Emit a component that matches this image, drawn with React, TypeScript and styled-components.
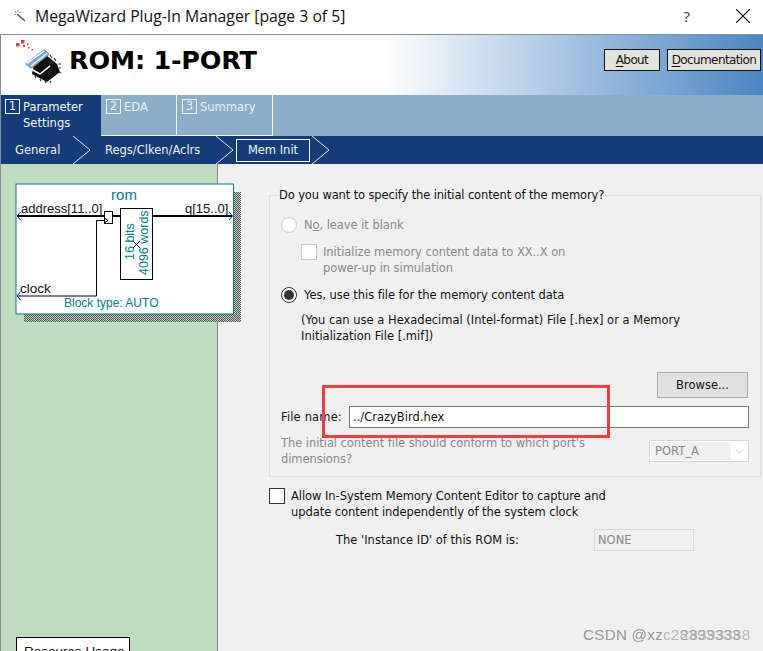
import React from "react";
import styled, { createGlobalStyle } from "styled-components";
import { X, ChevronDown } from "lucide-react";

const Global = createGlobalStyle`
  html, body { margin: 0; padding: 0; background: #fff; }
  * { box-sizing: border-box; }
`;
const UI = `"DejaVu Sans", "Liberation Sans", sans-serif`;

const Page = styled.div`
  position: relative; width: 763px; height: 651px; overflow: hidden;
  display: flex; flex-direction: column;
  font-family: ${UI}; font-size: 11.5px; color: #111;
`;
const TitleBar = styled.div`
  height: 35px; flex: none; display: flex; align-items: center;
  padding: 0 7px 3px 13px; background: #fff; border-bottom: 1px solid #8a8d91;
`;
const TitleText = styled.div`
  margin-left: 9px; font: 15.75px "Open Sans", sans-serif; color: #111; flex: 1;
`;
const Help = styled.div`
  font: 15px "Open Sans", sans-serif; color: #333; margin-right: 40px;
`;
const Frame = styled.div`
  flex: 1; display: flex; flex-direction: column; min-height: 0;
  border-left: 1px solid #8a8d91;
`;
const Header = styled.div`
  height: 60px; flex: none; display: flex; align-items: center;
  padding: 0 2px 0 15px;
  background: linear-gradient(90deg, #fff 0%, #fff 50%, #4a86c3 100%);
`;
const HeaderTitle = styled.div`
  margin-left: 7px; font: bold 25.5px "DejaVu Sans", sans-serif; color: #000; flex: 1;
  letter-spacing: -0.25px; position: relative; top: -5px;
`;
const HeadButton = styled.div<{ $w: number }>`
  width: ${p => p.$w}px; height: 22px; margin-left: 7px; margin-top: -10px;
  background: #e3e3de; border: 1px solid #111;
  display: flex; align-items: center; justify-content: center; color: #111; font-size: 12px;
  letter-spacing: -0.6px;
  u { text-underline-offset: 2px; }
`;
const Tabs = styled.div`
  height: 41px; flex: none; display: flex; background: #8bafcb;
`;
const Tab = styled.div<{ $w: number; $active?: boolean }>`
  width: ${p => p.$w}px; display: flex; padding: 4px 0 0 ${p => p.$active ? 4 : 5}px; gap: 3px;
  color: ${p => p.$active ? "#f4f7fa" : "#eaf0f5"};
  background: ${p => p.$active ? "#143c78" : "transparent"};
  line-height: 16px;
  ${p => p.$active ? "" : "border: 1px solid #f2f5f8; border-width: 0 1px 1px 0;"}
`;
const TabNum = styled.span`
  width: 15px; height: 15px; flex: none; border: 1px solid #f2f5f8;
  display: flex; align-items: center; justify-content: center; font-size: 11.5px; line-height: 1;
`;
const Steps = styled.div`
  height: 28px; flex: none; display: flex; align-items: center; background: #143c78; color: #f0f3f7;
`;
const Step = styled.div<{ $w: number; $pad: number }>`
  width: ${p => p.$w}px; padding-left: ${p => p.$pad}px; white-space: nowrap;
`;
const StepBox = styled.div`
  width: 74px; height: 23px; border: 1px solid #fff; display: flex;
  align-items: center; justify-content: center; margin: 0 2px 0 3px;
`;
const Chevron = () => (
  <svg width="17" height="28" viewBox="0 0 17 28" style={{ flex: "none" }}>
    <path d="M0 0 L17 14 L0 28" fill="none" stroke="#dfe6ef" strokeWidth="1" />
  </svg>
);
const Body = styled.div`flex: 1; display: flex; min-height: 0;`;
const LeftPane = styled.div`
  position: relative; z-index: 1;
  width: 217px; flex: none; background: #c0dcc0; border-right: 1px solid #8a8d91;
  display: flex; flex-direction: column; padding: 19px 0 0 14px;
`;
const Diagram = styled.svg`flex: none; display: block;`;
const ResourceButton = styled.div`
  flex: none; margin-top: auto; margin-bottom: -12px; margin-left: 1px; width: 114px; height: 26px;
  background: #fff; border: 1px solid #000; padding: 6px 0 0 7px; white-space: nowrap;
  font: 13.5px "Liberation Sans", sans-serif; color: #111;
`;
const RightPane = styled.div`
  flex: 1; background: #f0f0f0; padding: 24px 2px 0 51px; display: flex; flex-direction: column;
`;
const Group = styled.fieldset`
  margin: 0; padding: 0 11px 0 11px; border: 1px solid #dcdcdc; height: 289px; min-width: 0;
  display: flex; flex-direction: column;
`;
const Legend = styled.legend`
  padding: 0 1px 0 0; margin-left: -2px; line-height: 14px; white-space: nowrap; letter-spacing: -0.13px;
`;
const RadioRow = styled.div<{ $disabled?: boolean; $top: number }>`
  display: flex; align-items: center; height: 16px; margin-top: ${p => p.$top}px; gap: 7px;
  letter-spacing: -0.06px;
  color: ${p => p.$disabled ? "#888" : "#111"};
`;
const Radio = styled.span<{ $on?: boolean; $disabled?: boolean }>`
  width: 16px; height: 16px; flex: none; border-radius: 50%; background: #fff;
  border: 1px solid ${p => p.$disabled ? "#ccc" : "#333"};
  display: flex; align-items: center; justify-content: center;
  &::after { content: ""; width: 10px; height: 10px; border-radius: 50%; background: ${p => p.$on ? "#333" : "transparent"}; }
`;
const Indented = styled.div<{ $top: number; $disabled?: boolean }>`
  margin: ${p => p.$top}px 0 0 20px; display: flex; gap: 6px; line-height: 16px;
  color: ${p => p.$disabled ? "#888" : "#111"};
  letter-spacing: ${p => p.$disabled ? "-0.06px" : "0"};
`;
const Check = styled.span<{ $disabled?: boolean }>`
  width: 16px; height: 16px; flex: none; background: #fff;
  border: 1px solid ${p => p.$disabled ? "#ccc" : "#333"};
`;
const BrowseRow = styled.div`display: flex; justify-content: flex-end; margin-top: 28px; padding-right: 1px;`;
const Browse = styled.div`
  width: 91px; height: 26px; background: #e1e1e1; border: 1px solid #adadad;
  display: flex; align-items: center; justify-content: center;
`;
const FileRow = styled.div`display: flex; align-items: center; margin-top: 8px; height: 22px;`;
const FileLabel = styled.div`width: 68px; flex: none; white-space: nowrap; letter-spacing: .15px;`;
const FileInput = styled.div`
  width: 400px; height: 22px; background: #fff; border: 1px solid #7a7a7a; padding-left: 3px;
  display: flex; align-items: center;
`;
const PortRow = styled.div`display: flex; justify-content: space-between; margin-top: 7px; color: #888;`;
const PortText = styled.div`line-height: 16px; width: 330px; letter-spacing: -0.06px;`;
const PortSelect = styled.div`
  width: 100px; height: 22px; margin-top: 5px; background: #fff; border: 1px solid #d9d9d9;
  padding: 1px; display: flex; color: #888;
`;
const PortValue = styled.div`
  width: 80px; background: #f0f0f0; padding-left: 4px; display: flex; align-items: center;
`;
const PortArrow = styled.div`flex: 1; display: flex; align-items: center; justify-content: center; color: #aaa;`;
const AllowRow = styled.div`display: flex; gap: 6px; margin-top: 11px; line-height: 16px; letter-spacing: -0.06px;`;
const InstanceRow = styled.div`display: flex; align-items: center; margin: 9px 0 0 67px;`;
const InstanceLabel = styled.div`width: 258px; flex: none; white-space: nowrap;`;
const InstanceInput = styled.div`
  width: 100px; height: 22px; border: 1px solid #d9d9d9; background: #f0f0f0; color: #888;
  padding-left: 3px; display: flex; align-items: center;
`;
const RedBox = styled.div`
  position: absolute; left: 322px; top: 385px; width: 288px; height: 53px; border: 3px solid #f73b3b; z-index: 2;
`;
const Watermark = styled.div`
  position: absolute; left: 583px; top: 626px; font: 15.3px "Liberation Sans", sans-serif; letter-spacing: .2px;
  color: rgba(125,125,125,.5); white-space: pre; filter: blur(.3px); z-index: 2;
`;

const T: React.FC<{ x: number; y: number; s: number; c?: string; a?: "middle"; r?: boolean; children: string }> = ({ x, y, s, c = "#111", a, r, children }) => (
  <text x={x} y={y} fontSize={s} fill={c} textAnchor={a} fontFamily="'Liberation Sans', sans-serif"
    transform={r ? `rotate(-90 ${x} ${y})` : undefined}>{children}</text>
);

const RomDiagram = () => (
  <Diagram width="230" height="142" viewBox="15 183 230 142">
    <defs>
      <pattern id="hatch" width="2" height="2" patternUnits="userSpaceOnUse">
        <rect width="2" height="2" fill="#c0d0c0" />
        <rect width="1" height="1" fill="#555" />
        <rect x="1" y="1" width="1" height="1" fill="#555" />
      </pattern>
    </defs>
    <rect x="24" y="192" width="217" height="130" fill="url(#hatch)" />
    <rect x="16" y="184" width="217.5" height="130" fill="#fff" stroke="#007c80" strokeWidth="1" />
    <T x={124} y={200} s={15} c="#00808a" a="middle">rom</T>
    <T x={21} y={213} s={13}>address[11..0]</T>
    <T x={185} y={213} s={13}>q[15..0]</T>
    <T x={20} y={293} s={13.5}>clock</T>
    <path d="M17 216H104M113 216H120M153 216H232" stroke="#000" strokeWidth="2" fill="none" />
    <path d="M17.5 296H96.5V220.5H104" stroke="#000" strokeWidth="1" fill="none" />
    <rect x="104.5" y="211.5" width="8" height="12" fill="#fff" stroke="#000" />
    <path d="M105 218.5L108 220.5L105 222.5" fill="none" stroke="#000" />
    <rect x="120.5" y="208.5" width="32" height="71" fill="#fff" stroke="#000" />
    <T x={134} y={260} s={12.5} c="#00808a" r>16 bits</T>
    <T x={148} y={275} s={12.5} c="#00808a" r>4096 words</T>
    <path d="M133 241L140 248M140 241L133 248" stroke="#000" />
    <path d="M20.5 212L17 216L20.5 220M229 212L232.5 216L229 220M20.5 291.5L17 296L20.5 300" stroke="#1010e0" fill="none" />
    <T x={64} y={307} s={12} c="#00808a">Block type: AUTO</T>
  </Diagram>
);

const Logo = () => (
  <svg width="46" height="46" viewBox="0 0 46 46" style={{ flex: "none", marginTop: -4 }}>
    <g fill="#d8433c">
      <rect x="0" y="3" width="3.5" height="3.5" /><rect x="5" y="0" width="3.5" height="3.5" />
      <rect x="7" y="5" width="2" height="2" /><rect x="11" y="3.5" width="1.5" height="1.5" />
      <rect x="12" y="7" width="1.5" height="1.5" /><rect x="15.5" y="9" width="1.5" height="1.5" />
    </g>
    <path d="M18 24L30 15L41 24L44 32L31 42L16 34Z" fill="#111" />
    <path d="M30 13L32 16M34 15L36 18M38 18L40 21M42 24L45 24M43 28L45 28M43 32L45 33M34 41L35 43M29 41L30 43M24 39L25 41M19 36L20 38" stroke="#333" strokeWidth="1.2" />
    <path d="M9 24L28 9L34 14L15 29Z" fill="#7fa6d6" />
    <path d="M11 23.5L28 11M15 26L31 13.5" stroke="#fff" strokeWidth="1.2" />
    <path d="M15 29L24 34L34 26" fill="none" stroke="#fff" strokeWidth="1.6" />
  </svg>
);

export default function App() {
  return (
    <Page>
      <Global />
      <TitleBar>
        <svg width="13" height="13" viewBox="0 0 13 13" style={{ flex: "none" }}>
          <path d="M4 5L12 12" stroke="#555" strokeWidth="1.6" />
          <path d="M2 2L3 4M5 1L5 3M1 6L3 5M6 4L8 3" stroke="#999" strokeWidth="1" />
        </svg>
        <TitleText>MegaWizard Plug-In Manager [page 3 of 5]</TitleText>
        <Help>?</Help>
        <X size={26} strokeWidth={1} color="#222" />
      </TitleBar>
      <Frame>
        <Header>
          <Logo />
          <HeaderTitle>ROM: 1-PORT</HeaderTitle>
          <HeadButton $w={56}><span><u>A</u>bout</span></HeadButton>
          <HeadButton $w={94}><span><u>D</u>ocumentation</span></HeadButton>
        </Header>
        <Tabs>
          <Tab $w={100} $active><TabNum>1</TabNum><span>Parameter<br />Settings</span></Tab>
          <Tab $w={76}><TabNum>2</TabNum><span>EDA</span></Tab>
          <Tab $w={96}><TabNum>3</TabNum><span>Summary</span></Tab>
        </Tabs>
        <Steps>
          <Step $w={72} $pad={14}>General</Step>
          <Chevron />
          <Step $w={126} $pad={15}>Regs/Clken/Aclrs</Step>
          <Chevron />
          <StepBox>Mem Init</StepBox>
          <Chevron />
        </Steps>
        <Body>
          <LeftPane>
            <RomDiagram />
            <ResourceButton>Resource Usage</ResourceButton>
          </LeftPane>
          <RightPane>
            <Group>
              <Legend>Do you want to specify the initial content of the memory?</Legend>
              <RadioRow $disabled $top={15}><Radio $disabled /><span>N<u>o</u>, leave it blank</span></RadioRow>
              <Indented $top={11} $disabled>
                <Check $disabled />
                <span>Initialize memory content data to XX..X on<br />power-up in simulation</span>
              </Indented>
              <RadioRow $top={11}><Radio $on /><span>Yes, use this file for the memory content data</span></RadioRow>
              <Indented $top={9}>
                <span>(You can use a Hexadecimal (Intel-format) File [.hex] or a Memory<br />Initialization File [.mif])</span>
              </Indented>
              <BrowseRow><Browse>Browse...</Browse></BrowseRow>
              <FileRow><FileLabel>File name:</FileLabel><FileInput>../CrazyBird.hex</FileInput></FileRow>
              <PortRow>
                <PortText>The initial content file should conform to which port's dimensions?</PortText>
                <PortSelect>
                  <PortValue>PORT_A</PortValue>
                  <PortArrow><ChevronDown size={13} strokeWidth={1.2} /></PortArrow>
                </PortSelect>
              </PortRow>
            </Group>
            <AllowRow>
              <Check />
              <span>Allow In-System Memory Content Editor to capture and<br />update content independently of the system clock</span>
            </AllowRow>
            <InstanceRow>
              <InstanceLabel>The 'Instance ID' of this ROM is:</InstanceLabel>
              <InstanceInput>NONE</InstanceInput>
            </InstanceRow>
          </RightPane>
        </Body>
      </Frame>
      <RedBox />
      <Watermark>CSDN @xzc28393333</Watermark>
      <Watermark>{"CSDN @xz    28393388"}</Watermark>
    </Page>
  );
}
